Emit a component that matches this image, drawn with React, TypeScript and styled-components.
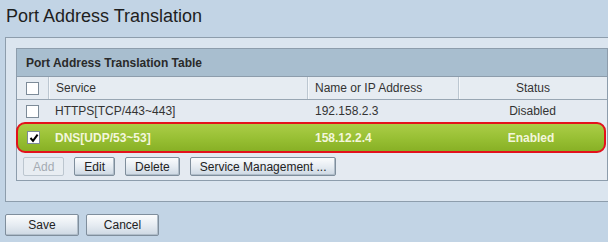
import React from "react";
import styled, { createGlobalStyle, css } from "styled-components";

const Global = createGlobalStyle`
  html, body { margin: 0; padding: 0; }
  body {
    background: #c2d4e5;
    font-family: "Liberation Sans", Arial, sans-serif;
    color: #222;
    overflow: hidden;
  }
`;

const Page = styled.div`
  padding: 6px 0 0 5px;
  width: 603px;
`;

const Title = styled.h1`
  margin: 0 0 11px 1px;
  font-size: 18px;
  line-height: 20px;
  font-weight: normal;
  color: #1e1e1e;
`;

const Panel = styled.div`
  border: 1px solid #8d9dac;
  background: #dbe5ef;
  padding: 10px 0 20px 10px;
  margin-right: -20px;
`;

const Table = styled.div`
  width: 590px;
  border: 1px solid #8d9dac;
  background: #e4eaf1;
  font-size: 12px;
  color: #333;
`;

const HeaderBar = styled.div`
  height: 27px;
  display: flex;
  align-items: center;
  padding-left: 9px;
  background: #a8becf;
  border-bottom: 1px solid #8d9dac;
  font-weight: bold;
  color: #2a2a2a;
`;

const Cols = "31px 259px 151px 1fr";

const HeadRow = styled.div`
  display: grid;
  grid-template-columns: ${Cols};
  height: 22px;
  border-bottom: 1px solid #98a6b3;
  background: #e6ecf2;
`;

const HeadCell = styled.div<{ $center?: boolean; $first?: boolean }>`
  display: flex;
  align-items: center;
  padding-left: ${(p) => (p.$center ? 0 : 7)}px;
  justify-content: ${(p) => (p.$center ? "center" : "flex-start")};
  ${(p) =>
    !p.$first &&
    css`
      border-left: 1px solid #bcc7d1;
      box-shadow: inset 1px 0 0 #f4f7fa;
    `}
`;

const Row = styled.div`
  display: grid;
  grid-template-columns: ${Cols};
  height: 22px;
`;

const SelRow = styled.div`
  display: grid;
  grid-template-columns: 30px 259px 151px 1fr;
  height: 27px;
  margin: 0 1px 0 -1px;
  border: 2px solid #e3121c;
  border-radius: 9px;
  background: linear-gradient(#abcd47, #97bf33 55%, #88b025);
  color: #f3f6dc;
  font-weight: bold;
`;

const Cell = styled.div<{ $center?: boolean; $pad?: number }>`
  display: flex;
  align-items: center;
  padding-left: ${(p) => (p.$center ? 0 : p.$pad ?? 7)}px;
  justify-content: ${(p) => (p.$center ? "center" : "flex-start")};
  white-space: nowrap;
`;

const Box = styled.span`
  width: 11px;
  height: 11px;
  margin-left: 9px;
  border: 1px solid #7d8b98;
  background: #fff;
  display: inline-flex;
  align-items: center;
  justify-content: center;
`;

const Actions = styled.div`
  display: flex;
  gap: 10px;
  padding: 4px 0 4px 6px;
`;

const Btn = styled.button<{ $w?: number }>`
  font-family: "Liberation Sans", Arial, sans-serif;
  font-size: 12px;
  color: #222;
  height: 19px;
  min-width: ${(p) => p.$w ?? 40}px;
  padding: 0 9px;
  border: 1px solid #7f8e9c;
  border-radius: 2px;
  background: linear-gradient(#fbfcfd, #e6ecf2 50%, #cdd8e3);
  box-shadow: inset -1px -1px 0 #b0bdc9;
  display: inline-flex;
  align-items: center;
  justify-content: center;
  &:disabled {
    color: #a4abb2;
    border-color: #bcc6cf;
    background: #e8edf2;
    box-shadow: none;
  }
`;

const Footer = styled.div`
  display: flex;
  gap: 7px;
  margin-top: 12px;
`;

const BigBtn = styled(Btn)`
  height: 22px;
  font-size: 12px;
`;

const Check = () => (
  <svg width="10" height="10" viewBox="0 0 10 10">
    <polyline points="1.5,5 4,7.8 8.6,1.6" fill="none" stroke="#000" strokeWidth="2" />
  </svg>
);

export default function App() {
  return (
    <>
      <Global />
      <Page>
        <Title>Port Address Translation</Title>
        <Panel>
          <Table>
            <HeaderBar>Port Address Translation Table</HeaderBar>
            <HeadRow>
              <HeadCell $first style={{ paddingLeft: 0 }}>
                <Box />
              </HeadCell>
              <HeadCell>Service</HeadCell>
              <HeadCell>Name or IP Address</HeadCell>
              <HeadCell $center>Status</HeadCell>
            </HeadRow>
            <Row>
              <Cell $pad={0}>
                <Box />
              </Cell>
              <Cell>HTTPS[TCP/443~443]</Cell>
              <Cell $pad={8}>192.158.2.3</Cell>
              <Cell $center>Disabled</Cell>
            </Row>
            <SelRow>
              <Cell $pad={0}>
                <Box>
                  <Check />
                </Box>
              </Cell>
              <Cell>DNS[UDP/53~53]</Cell>
              <Cell $pad={8}>158.12.2.4</Cell>
              <Cell $center>Enabled</Cell>
            </SelRow>
            <Actions>
              <Btn disabled>Add</Btn>
              <Btn>Edit</Btn>
              <Btn>Delete</Btn>
              <Btn>Service Management ...</Btn>
            </Actions>
          </Table>
        </Panel>
        <Footer>
          <BigBtn $w={74}>Save</BigBtn>
          <BigBtn $w={73}>Cancel</BigBtn>
        </Footer>
      </Page>
    </>
  );
}
